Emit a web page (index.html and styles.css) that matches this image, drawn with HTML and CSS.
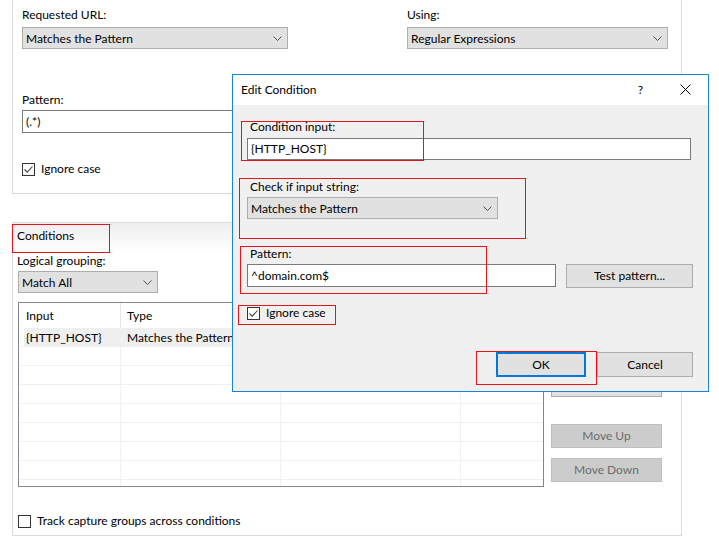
FILE: index.html
```html
<!DOCTYPE html>
<html lang="en">
<head>
<meta charset="utf-8">
<title>Edit Condition</title>
<link rel="stylesheet" href="styles.css">
</head>
<body>
<div class="page">
  <section class="rule-panel">
    <div class="top-row">
      <div class="field url">
        <span class="lbl lbl-top">Requested URL:</span>
        <div class="select"><span>Matches the Pattern</span><svg class="chev" width="9" height="5" viewBox="0 0 9 5"><path d="M0.5 0.5 L4.5 4.5 L8.5 0.5" fill="none" stroke="#555"/></svg></div>
      </div>
      <div class="field using">
        <span class="lbl lbl-top">Using:</span>
        <div class="select"><span>Regular Expressions</span><svg class="chev" width="9" height="5" viewBox="0 0 9 5"><path d="M0.5 0.5 L4.5 4.5 L8.5 0.5" fill="none" stroke="#555"/></svg></div>
      </div>
    </div>
    <div class="field pattern">
      <span class="lbl lbl-pat">Pattern:</span>
      <div class="textbox wide">(.*)</div>
    </div>
    <div class="check rule-check">
      <span class="box"><svg width="11" height="11" viewBox="0 0 11 11"><path d="M1.5 5.5 L4.2 8.2 L9.5 2.5" fill="none" stroke="#444" stroke-width="1.1"/></svg></span>
      <span>Ignore case</span>
    </div>
  </section>

  <section class="conditions">
    <div class="cond-title">Conditions</div>
    <span class="lbl lbl-group">Logical grouping:</span>
    <div class="select match-all"><span>Match All</span><svg class="chev" width="9" height="5" viewBox="0 0 9 5"><path d="M0.5 0.5 L4.5 4.5 L8.5 0.5" fill="none" stroke="#555"/></svg></div>
    <div class="cond-body">
      <div class="list">
        <div class="lrow head"><div class="c c1">Input</div><div class="c c2">Type</div><div class="c c3"></div><div class="c c4"></div></div>
        <div class="lrow sel"><div class="c c1">{HTTP_HOST}</div><div class="c c2">Matches the Pattern</div><div class="c c3"></div><div class="c c4"></div></div>
        <div class="lrow"><div class="c c1"></div><div class="c c2"></div><div class="c c3"></div><div class="c c4"></div></div>
        <div class="lrow"><div class="c c1"></div><div class="c c2"></div><div class="c c3"></div><div class="c c4"></div></div>
        <div class="lrow"><div class="c c1"></div><div class="c c2"></div><div class="c c3"></div><div class="c c4"></div></div>
        <div class="lrow"><div class="c c1"></div><div class="c c2"></div><div class="c c3"></div><div class="c c4"></div></div>
        <div class="lrow"><div class="c c1"></div><div class="c c2"></div><div class="c c3"></div><div class="c c4"></div></div>
        <div class="lrow"><div class="c c1"></div><div class="c c2"></div><div class="c c3"></div><div class="c c4"></div></div>
        <div class="lrow"><div class="c c1"></div><div class="c c2"></div><div class="c c3"></div><div class="c c4"></div></div>
        <div class="lrow"><div class="c c1"></div><div class="c c2"></div><div class="c c3"></div><div class="c c4"></div></div>
      </div>
      <div class="side-buttons">
        <div class="btn"></div>
        <div class="btn"></div>
        <div class="btn"></div>
        <div class="btn disabled move-up">Move Up</div>
        <div class="btn disabled">Move Down</div>
      </div>
    </div>
    <div class="check track-check">
      <span class="box"></span>
      <span>Track capture groups across conditions</span>
    </div>
    <div class="mark mark-cond"></div>
  </section>

  <div class="dialog">
    <div class="titlebar">
      <span class="title">Edit Condition</span>
      <span class="help">?</span>
      <svg class="close" width="11" height="11" viewBox="0 0 11 11"><path d="M0.5 0.5 L10.5 10.5 M10.5 0.5 L0.5 10.5" fill="none" stroke="#000" stroke-width="1"/></svg>
    </div>
    <div class="dlg-body">
      <span class="lbl d-lbl1">Condition input:</span>
      <div class="textbox d-input">{HTTP_HOST}</div>
      <span class="lbl d-lbl2">Check if input string:</span>
      <div class="select d-select"><span>Matches the Pattern</span><svg class="chev" width="9" height="5" viewBox="0 0 9 5"><path d="M0.5 0.5 L4.5 4.5 L8.5 0.5" fill="none" stroke="#555"/></svg></div>
      <span class="lbl d-lbl3">Pattern:</span>
      <div class="pat-row">
        <div class="textbox d-pattern">^domain.com$</div>
        <div class="btn test-btn">Test pattern...</div>
      </div>
      <div class="check d-check">
        <span class="box"><svg width="11" height="11" viewBox="0 0 11 11"><path d="M1.5 5.5 L4.2 8.2 L9.5 2.5" fill="none" stroke="#444" stroke-width="1.1"/></svg></span>
        <span>Ignore case</span>
      </div>
      <div class="dlg-buttons">
        <div class="btn ok-btn">OK</div>
        <div class="btn cancel-btn">Cancel</div>
      </div>
    </div>
    <div class="mark m1"></div>
    <div class="mark m2"></div>
    <div class="mark m3"></div>
    <div class="mark m4"></div>
    <div class="mark m5"></div>
  </div>
</div>
</body>
</html>
```

FILE: styles.css
```css
* { box-sizing: border-box; }
html, body { margin: 0; padding: 0; background: #fff; }
body {
  font-family: Lato, "Liberation Sans", sans-serif;
  font-size: 12px;
  line-height: 16px;
  color: #000;
  width: 719px;
  height: 545px;
  overflow: hidden;
}
.page { position: relative; padding-left: 12px; height: 545px; }

.lbl { display: block; height: 16px; white-space: nowrap; }

.select {
  height: 22px;
  border: 1px solid #adadad;
  background: #e1e1e1;
  display: flex;
  align-items: center;
  justify-content: space-between;
  padding: 1px 5px 0 3px;
  white-space: nowrap;
}
.chev { display: block; flex: none; margin-top: -1px; }
.textbox {
  height: 23px;
  border: 1px solid #7a7a7a;
  background: #fff;
  padding: 0 3px;
  display: flex;
  align-items: center;
  white-space: nowrap;
}

.check { display: flex; align-items: center; height: 16px; gap: 6px; white-space: nowrap; }
.box {
  width: 13px; height: 13px;
  border: 1px solid #333;
  background: #fff;
  display: flex; align-items: center; justify-content: center;
  flex: none;
}
.box svg { display: block; }

.btn {
  height: 24px;
  border: 1px solid #adadad;
  background: #e1e1e1;
  display: flex;
  align-items: center;
  justify-content: center;
  white-space: nowrap;
}
.btn.disabled { background: #cccccc; border-color: #bfbfbf; color: #6d6d6d; }

/* top rule panel */
.rule-panel {
  width: 670px;
  height: 194px;
  border: 1px solid #dadada;
  border-top: 0;
  padding: 7px 0 0 9px;
}
.top-row { display: flex; gap: 119px; }
.url { width: 266px; }
.using { width: 261px; }
.lbl-top { margin-bottom: 4px; }
.pattern { margin-top: 43px; }
.lbl-pat { margin-bottom: 2px; }
.textbox.wide { width: 646px; }
.rule-check { margin-top: 28px; }

/* conditions */
.conditions {
  position: relative;
  margin-top: 28px;
  width: 670px;
  height: 314px;
  border: 1px solid #dcdcdc;
  padding: 5px 0 0 4px;
  background: linear-gradient(#eeeeee, #ffffff 30px);
}
.cond-title { height: 16px; }
.lbl-group { margin-top: 9px; margin-bottom: 2px; }
.match-all { width: 140px; margin-left: 1px; }
.cond-body { display: flex; margin-top: 9px; margin-left: 1px; }
.list {
  width: 526px;
  height: 185px;
  border: 1px solid #828790;
  background: #fff;
  overflow: hidden;
}
.lrow { display: flex; height: 19px; border-bottom: 1px solid #f0f0f0; }
.lrow.head { height: 25px; border-bottom: 0; }
.lrow.sel { background: linear-gradient(to right, #fff 5px, #efefef 5px); }
.lrow.sel .c { padding-top: 1px; }
.c {
  height: 100%;
  border-right: 1px solid #f0f0f0;
  padding-left: 6px;
  display: flex;
  align-items: center;
  white-space: nowrap;
  overflow: hidden;
}
.head .c { border-right-color: #e5e5e5; }
.c1 { width: 102px; padding-left: 7px; }
.c2 { width: 160px; }
.c3 { width: 180px; }
.c4 { flex: 1; border-right: 0; }

.side-buttons {
  width: 111px;
  margin-left: 7px;
  margin-top: 3px;
  display: flex;
  flex-direction: column;
  gap: 10px;
}
.side-buttons .move-up { margin-top: 17px; }
.track-check { margin-top: 26px; margin-left: 1px; }

/* annotation marks */
.mark { position: absolute; border: 1px solid #e3141c; }
.mark-cond { left: -1px; top: 1px; width: 98px; height: 29px; }

/* dialog */
.dialog {
  position: absolute;
  left: 232px;
  top: 74px;
  width: 477px;
  height: 318px;
  border: 1px solid #1883d7;
  background: #f0f0f0;
}
.titlebar {
  height: 30px;
  background: #fff;
  display: flex;
  align-items: center;
  padding-left: 8px;
  padding-bottom: 1px;
}
.help { margin-left: auto; margin-right: 37px; }
.close { display: block; margin-right: 17px; }
.dlg-body { padding: 14px 15px 0 14px; }
.dlg-body > .lbl { margin-left: 3px; }
.d-lbl1 { margin-bottom: 3px; }
.d-input { width: 444px; height: 22px; }
.d-lbl2 { margin-top: 19px; margin-bottom: 2px; }
.d-select { width: 251px; }
.d-lbl3 { margin-top: 27px; margin-bottom: 2px; }
.pat-row { display: flex; align-items: flex-start; gap: 10px; }
.d-pattern { width: 309px; }
.test-btn { width: 127px; }
.d-check { margin-top: 17px; }
.dlg-buttons { display: flex; justify-content: flex-end; gap: 11px; margin-top: 31px; }
.ok-btn { width: 90px; height: 25px; border: 2px solid #0078d7; }
.cancel-btn { width: 96px; height: 25px; }

.m1 { left: 8px; top: 46px; width: 183px; height: 40px; }
.m2 { left: 6px; top: 103px; width: 287px; height: 61px; }
.m3 { left: 7px; top: 171px; width: 247px; height: 48px; }
.m4 { left: 5px; top: 230px; width: 98px; height: 20px; }
.m5 { left: 243px; top: 276px; width: 121px; height: 34px; }
```
